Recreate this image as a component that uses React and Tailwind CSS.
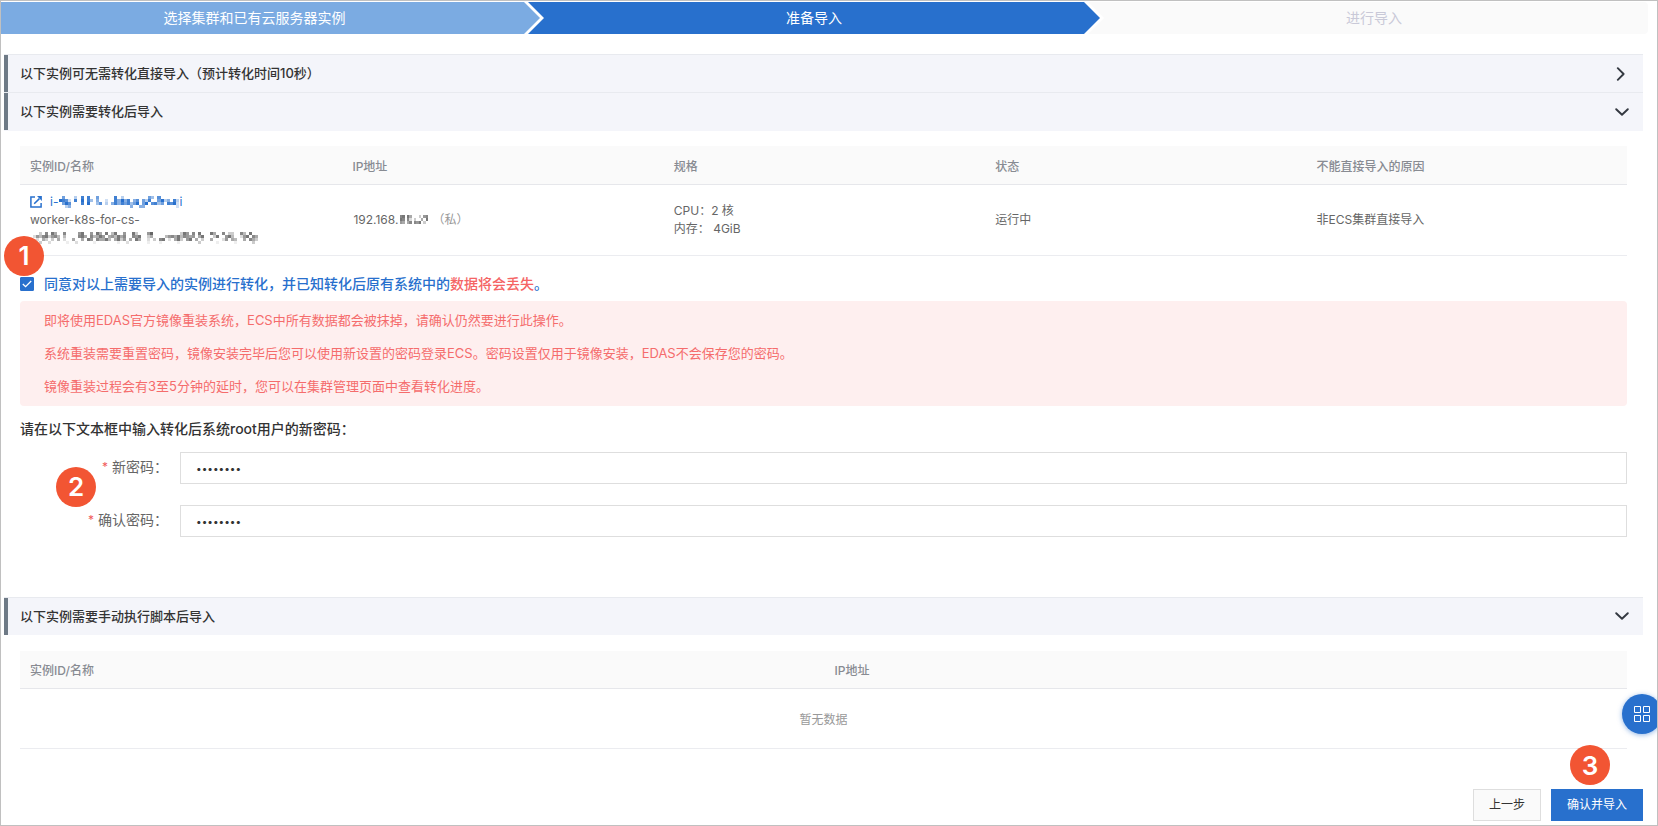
import React, { useState } from "react";

const ID_MASK = [
  "060003080800600000803000000006407000000",
  "987208090840500200859580570638006935083",
  "069700080900470305858684690690784608792",
  "003500000000000000000005005500000000002",
];

const NAME_MASK = [
  "0003070850070000680060850804800600830006900000000038607080008500703300740800",
  "0264783674040000785074586056485700768003500004675847656058000380068400268075",
  "7020530305020050050860755840583605085002030780205830680503005000260540050753",
  "0003002000001002000001000000010020000001000100000100000030000010000010000030",
];

const IP_MASK = ["780850003067", "870720300508", "650570768030"];

function Mask({ rows, className, width, cell = 3 }) {
  return (
    <svg
      className={className}
      width={width}
      height={rows.length * cell}
      viewBox={`0 0 ${rows[0].length * cell} ${rows.length * cell}`}
      preserveAspectRatio="none"
      fill="currentColor"
      shapeRendering="crispEdges"
      aria-hidden="true"
    >
      {rows.flatMap((row, y) =>
        [...row].map((level, x) =>
          level === "0" ? null : (
            <rect key={`${x}-${y}`} x={x * cell} y={y * cell} width={cell} height={cell} opacity={Number(level) / 9} />
          )
        )
      )}
    </svg>
  );
}

function Chevron({ open }) {
  return (
    <svg width="14" height="14" viewBox="0 0 14 14" fill="none" stroke="#333840" strokeWidth="1.9" strokeLinecap="round" strokeLinejoin="round" aria-hidden="true">
      <path d={open ? "M1.2 4.2 7 9.8 12.8 4.2" : "M2.8 1.2 8.6 7 2.8 12.8"} />
    </svg>
  );
}

function PanelHeader({ open, children }) {
  return (
    <div className="border-t border-[#e8eaef]">
      <button
        type="button"
        aria-expanded={open}
        className="flex h-[37px] w-full items-center justify-between border-l-4 border-[#6e7a86] bg-[#f4f5fa] pr-3.5 pl-3 text-left text-[13px] font-medium text-[#333333]"
      >
        <span className="pt-px">{children}</span>
        <Chevron open={open} />
      </button>
    </div>
  );
}

function Badge({ className, children }) {
  return (
    <span
      className={`absolute z-10 flex size-10 items-center justify-center rounded-full bg-[#f25533] pt-0.5 font-['Inter',sans-serif] text-[26px] font-semibold text-white ${className}`}
    >
      {children}
    </span>
  );
}

function Th({ children }) {
  return <th className="pt-1 pl-[11px] text-left font-medium first:pl-2.5">{children}</th>;
}

function PasswordRow({ id, label }) {
  const [value, setValue] = useState("password");
  return (
    <div className="flex items-center">
      <label htmlFor={id} className="flex w-[148px] shrink-0 justify-end gap-1 pb-0.5 text-sm text-[#666666]">
        <span className="text-xs leading-5 text-[#f15b5b]">*</span>
        {label}：
      </label>
      <input
        id={id}
        type="password"
        value={value}
        onChange={(e) => setValue(e.target.value)}
        className="ml-3 h-8 min-w-0 flex-1 border border-[#dedede] bg-white px-[15px] text-[10px] text-[#333333] outline-none"
      />
    </div>
  );
}

export default function App() {
  const [agreed, setAgreed] = useState(true);
  return (
    <div className="relative min-h-screen overflow-hidden border border-[#c0c0c0] bg-white pt-px pb-1 font-['Inter','Noto_Sans_CJK_SC',sans-serif] text-xs text-[#666666]">
      <ol className="mr-[9px] grid h-8 grid-cols-[527fr_560fr_560fr] text-sm">
        <li className="-mr-3 flex items-center justify-center bg-[#7babe2] pr-8 text-white [clip-path:polygon(0_0,calc(100%-16px)_0,100%_50%,calc(100%-16px)_100%,0_100%)]">
          选择集群和已有云服务器实例
        </li>
        <li
          aria-current="step"
          className="-mr-3 flex items-center justify-center bg-[#2870cd] text-white [clip-path:polygon(0_0,calc(100%-16px)_0,100%_50%,calc(100%-16px)_100%,0_100%,16px_50%)]"
        >
          准备导入
        </li>
        <li className="flex items-center justify-center rounded-r bg-[#fafafa] pl-3 text-[#c9c9d8] [clip-path:polygon(0_0,100%_0,100%_100%,0_100%,16px_50%)]">
          进行导入
        </li>
      </ol>

      <main className="mt-5 mr-3.5 ml-[3px]">
        <div className="border-b border-[#f4f5fa]">
          <PanelHeader open={false}>以下实例可无需转化直接导入（预计转化时间10秒）</PanelHeader>
          <PanelHeader open>以下实例需要转化后导入</PanelHeader>
        </div>

        <section className="mx-4 mt-[15px]">
          <table className="w-full table-fixed border-collapse">
            <thead>
              <tr className="h-[38px] border-b border-[#e6e7eb] bg-[#fafafa] text-[#888b92]">
                <Th>实例ID/名称</Th>
                <Th>IP地址</Th>
                <Th>规格</Th>
                <Th>状态</Th>
                <Th>不能直接导入的原因</Th>
              </tr>
            </thead>
            <tbody>
              <tr className="h-[71px] border-b border-[#ebecf0] leading-[18px]">
                <td className="py-2 pl-2.5">
                  <a href="#instance" className="flex h-[18px] items-center text-[#2870cd]">
                    <svg width="12" height="12" viewBox="0 0 12 12" fill="none" stroke="currentColor" strokeWidth="1.5" aria-hidden="true">
                      <path d="M5 .9H.9v10.2h10.2V7M4.2 7.8 9.4 2.6" />
                      <path d="M7 .1h4.9V5z" fill="currentColor" stroke="none" />
                    </svg>
                    <span className="ml-2">i-</span>
                    <Mask rows={ID_MASK} width={120} className="ml-px" />
                    i
                  </a>
                  <div>worker-k8s-for-cs-</div>
                  <div className="flex h-[18px] items-center">
                    <Mask rows={NAME_MASK} width={228} />
                  </div>
                </td>
                <td className="pl-3">
                  <div className="flex items-center">
                    192.168.
                    <Mask rows={IP_MASK} width={28} className="ml-0.5" />
                    <span className="ml-1 text-[#999999]">（私）</span>
                  </div>
                </td>
                <td className="pl-[11px]">
                  <div>CPU：2 核</div>
                  <div>内存： 4GiB</div>
                </td>
                <td className="pl-[11px]">运行中</td>
                <td className="pl-[11px]">非ECS集群直接导入</td>
              </tr>
            </tbody>
          </table>

          <div className="relative mt-[18px]">
            <Badge className="-top-[38px] -left-4">1</Badge>
            <label className="flex items-center gap-2.5 text-sm leading-5 font-medium text-[#2870cd]">
              <span className="grid size-3.5 shrink-0 place-items-center">
                <input
                  type="checkbox"
                  checked={agreed}
                  onChange={(e) => setAgreed(e.target.checked)}
                  className="peer col-start-1 row-start-1 size-3.5 appearance-none rounded-[1px] border border-[#2870cd] checked:bg-[#2870cd]"
                />
                <svg className="pointer-events-none invisible col-start-1 row-start-1 peer-checked:visible" width="10" height="8" viewBox="0 0 10 8" fill="none" stroke="white" strokeWidth="1.3" aria-hidden="true">
                  <path d="M.8 4 3.6 6.7 9.2 1" />
                </svg>
              </span>
              <span>
                同意对以上需要导入的实例进行转化，并已知转化后原有系统中的<span className="text-[#f56464]">数据将会丢失</span>。
              </span>
            </label>
          </div>

          <div className="mt-[7px] rounded bg-[#feefef] px-6 py-[3px] text-[13px] leading-[33px] text-[#f56c6c]">
            <p>即将使用EDAS官方镜像重装系统，ECS中所有数据都会被抹掉，请确认仍然要进行此操作。</p>
            <p>系统重装需要重置密码，镜像安装完毕后您可以使用新设置的密码登录ECS。密码设置仅用于镜像安装，EDAS不会保存您的密码。</p>
            <p>镜像重装过程会有3至5分钟的延时，您可以在集群管理页面中查看转化进度。</p>
          </div>

          <p className="mt-[13px] text-sm leading-5 font-medium text-[#333333]">请在以下文本框中输入转化后系统root用户的新密码：</p>
          <form className="relative mt-[13px] flex flex-col gap-[21px]">
            <Badge className="top-[15px] left-9">2</Badge>
            <PasswordRow id="new-password" label="新密码" />
            <PasswordRow id="confirm-password" label="确认密码" />
          </form>
        </section>

        <div className="mt-[60px]">
          <PanelHeader open>以下实例需要手动执行脚本后导入</PanelHeader>
        </div>
        <section className="mx-4 mt-4">
          <table className="w-full table-fixed border-collapse">
            <thead>
              <tr className="h-[38px] border-b border-[#e6e7eb] bg-[#fafafa] text-[#888b92]">
                <Th>实例ID/名称</Th>
                <Th>IP地址</Th>
              </tr>
            </thead>
            <tbody>
              <tr className="h-[60px] border-b border-[#ebecf0]">
                <td colSpan={2} className="pt-0.5 text-center text-[#999999]">
                  暂无数据
                </td>
              </tr>
            </tbody>
          </table>
        </section>

        <footer className="mt-10 flex justify-end gap-2.5">
          <button type="button" className="h-8 border border-[#dedede] bg-[#fafafa] px-[15px] text-[#333333]">
            上一步
          </button>
          <div className="relative">
            <Badge className="-top-11 left-[19px]">3</Badge>
            <button type="button" className="h-8 bg-[#2870cd] px-4 text-white">
              确认并导入
            </button>
          </div>
        </footer>
      </main>

      <button
        type="button"
        aria-label="快捷菜单"
        className="absolute -right-[5px] bottom-[91px] flex size-10 items-center justify-center rounded-full bg-[#2870cd] text-white shadow-[0_1px_5px_rgba(40,112,205,0.5)]"
      >
        <svg width="16" height="16" viewBox="0 0 16 16" fill="none" stroke="currentColor" aria-hidden="true">
          <path d="M.5.5h6v6h-6zM9.5.5h6v6h-6zM.5 9.5h6v6h-6zM9.5 9.5h6v6h-6z" />
        </svg>
      </button>
    </div>
  );
}
